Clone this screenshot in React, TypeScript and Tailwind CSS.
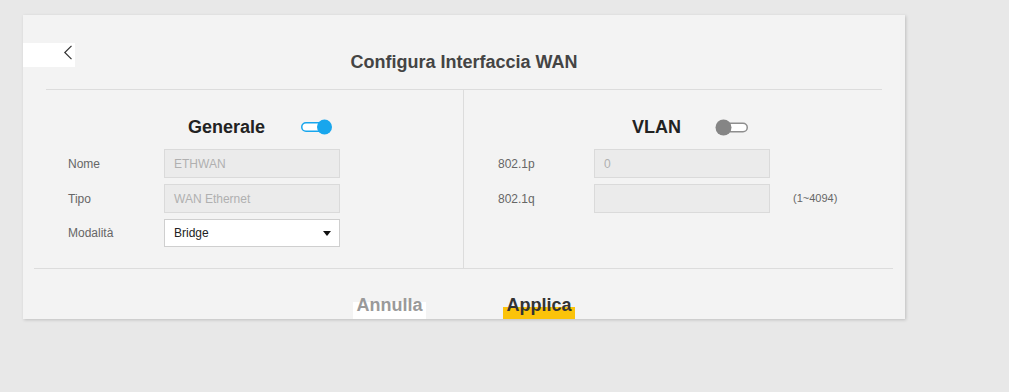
import React from "react";

function ToggleOn() {
  return (
    <svg width="31" height="16" viewBox="0 0 31 16">
      <rect x="0.75" y="3.75" width="24" height="8.5" rx="4.25" fill="#ffffff" stroke="#18a6ed" strokeWidth="1.5" />
      <circle cx="23.5" cy="8" r="7.5" fill="#18a6ed" />
    </svg>
  );
}

function ToggleOff() {
  return (
    <svg width="33" height="17" viewBox="0 0 33 17">
      <rect x="6" y="4.25" width="26.25" height="8.5" rx="4.25" fill="#ffffff" stroke="#8e8e8e" strokeWidth="1.5" />
      <circle cx="8.5" cy="8.5" r="8" fill="#858585" />
    </svg>
  );
}

function Field({ label, value, extra }: { label: string; value: string; extra?: string }) {
  return (
    <div className="flex h-[29px] items-center">
      <div className="w-[96px] text-[12px] text-[#666]">{label}</div>
      <div className="flex h-[29px] w-[176px] items-center border border-[#dadada] bg-[#ebebeb] pl-[9px] text-[12px] text-[#b0b0b0]">
        {value}
      </div>
      {extra && <div className="ml-[23px] text-[11px] text-[#666]">{extra}</div>}
    </div>
  );
}

export default function App() {
  return (
    <div
      className="h-[392px] w-[1009px] overflow-hidden bg-[#e8e8e8] pt-[15px] pl-[23px]"
      style={{ fontFamily: "'Liberation Sans', Arial, sans-serif" }}
    >
      <div className="flex h-[304px] w-[882px] flex-col bg-[#f3f3f3] shadow-[1px_1px_3px_rgba(0,0,0,0.18)]">
        {/* Header */}
        <div className="relative h-[74px] pt-[36px] text-center">
          <button className="absolute left-0 top-[28px] h-[24px] w-[52px] bg-white">
            <svg className="absolute left-[40px] top-[2px]" width="10" height="15" viewBox="0 0 10 15">
              <path d="M8.5 0.8 L1.8 7.5 L8.5 14.2" fill="none" stroke="#333" strokeWidth="1.2" />
            </svg>
          </button>
          <div className="text-[18px] font-bold leading-[22px] text-[#444]">Configura Interfaccia WAN</div>
        </div>
        <div className="mx-[23px] h-px bg-[#dcdcdc]" />

        {/* Columns */}
        <div className="ml-[11px] mr-[12px] grid h-[179px] grid-cols-[430px_1fr] border-b border-[#dcdcdc]">
          <div className="border-r border-[#dcdcdc] pt-[23px] pl-[34px]">
            <div className="-ml-[34px] flex h-[28px] items-center justify-center gap-[36px] pl-[23px]">
              <span className="text-[18px] font-bold leading-[22px] text-[#222]">Generale</span>
              <ToggleOn />
            </div>
            <div className="mt-[8px] flex flex-col gap-[6px]">
              <Field label="Nome" value="ETHWAN" />
              <Field label="Tipo" value="WAN Ethernet" />
              <div className="flex h-[28px] items-center">
                <div className="w-[96px] text-[12px] text-[#666]">Modalità</div>
                <div className="flex h-[28px] w-[176px] items-center justify-between border border-[#cfcfcf] bg-white pl-[9px] pr-[8px] text-[12px] text-[#222]">
                  <span>Bridge</span>
                  <svg width="8" height="5" viewBox="0 0 8 5">
                    <path d="M0 0 H8 L4 5 Z" fill="#111" />
                  </svg>
                </div>
              </div>
            </div>
          </div>
          <div className="pt-[23px] pl-[34px]">
            <div className="-ml-[34px] flex h-[28px] items-center justify-center gap-[34px] pl-[23px]">
              <span className="text-[18px] font-bold leading-[22px] text-[#222]">VLAN</span>
              <ToggleOff />
            </div>
            <div className="mt-[8px] flex flex-col gap-[6px]">
              <Field label="802.1p" value="0" />
              <Field label="802.1q" value="" extra="(1~4094)" />
            </div>
          </div>
        </div>

        {/* Buttons */}
        <div className="flex h-[50px] justify-center gap-[77px] pt-[24px]">
          <button className="relative h-[26px] w-[73px] text-center">
            <span className="absolute inset-x-0 bottom-0 h-[17px] bg-white" />
            <span className="relative text-[18px] font-bold leading-[22px] text-[#9a9a9a]">Annulla</span>
          </button>
          <button className="relative h-[26px] w-[72px] text-center">
            <span className="absolute inset-x-0 bottom-0 h-[12px] bg-[#fbc30a]" />
            <span className="relative text-[18px] font-bold leading-[22px] text-[#333]">Applica</span>
          </button>
        </div>
      </div>
    </div>
  );
}
